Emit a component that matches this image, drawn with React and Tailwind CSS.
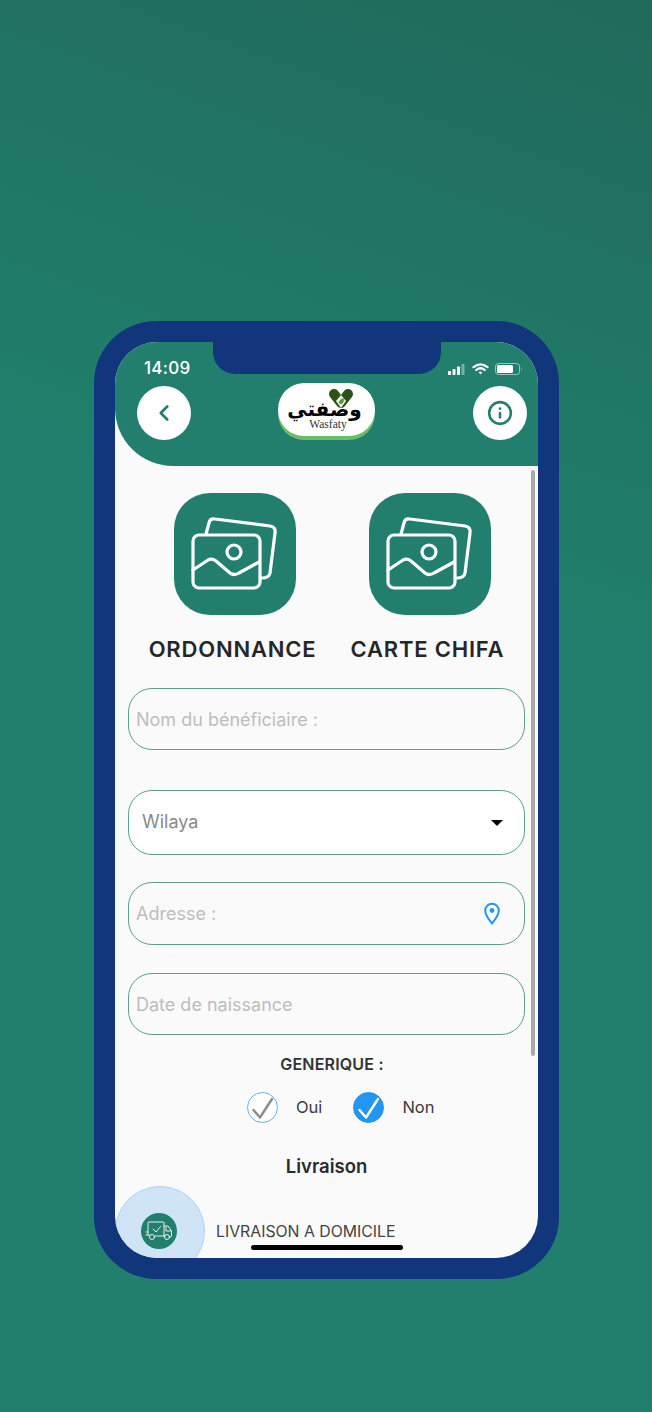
import { ChevronLeft, Info } from "lucide-react";

const PhotosIcon = () => (
  <svg width="122" height="122" viewBox="0 0 122 122" fill="none" stroke="white" strokeWidth="3.2" strokeLinecap="round" strokeLinejoin="round">
    <rect x="19" y="42" width="67" height="53" rx="6" />
    <path d="M32 41 L35 30 Q36 25 41 26 L96 33 Q102 34 101 40 L96 80 Q95 85 88 85" />
    <circle cx="60" cy="59" r="7" />
    <path d="M19 77 L34 67 Q38 65 42 68 L56 80 Q60 83 65 80 L85 69" />
  </svg>
);

const Field = ({ label, className = "", children }) => (
  <div className={`flex items-center rounded-[24px] border border-[#5f9e8f] pl-[7px] pr-[24px] text-[18px] text-[#bdbdbd] ${className}`}>
    <span className="flex-1">{label}</span>
    {children}
  </div>
);

const Tile = ({ label }) => (
  <div className="flex flex-col items-center">
    <div className="ml-[5px] h-[122px] w-[122px] rounded-[36px] bg-[#227f6d]">
      <PhotosIcon />
    </div>
    <span className="mt-[20px] whitespace-nowrap text-[22px] leading-[28px] font-semibold tracking-[0.8px] text-[#262626]">{label}</span>
  </div>
);

const Logo = () => (
  <div className="h-[57px] w-[97px] overflow-hidden rounded-[26px] bg-[#6dbd68]">
    <div className="flex h-[53px] w-full flex-col items-center rounded-[26px] bg-white">
      <svg className="mt-[5px] ml-[29px]" width="28" height="22" viewBox="0 0 28 22" fill="none">
        <path d="M7 6 L14 15 L21 6" stroke="#2c5219" strokeWidth="10" strokeLinecap="round" strokeLinejoin="round" />
        <path d="M14 7 L19 13 L14 20 L9 13 Z" fill="#eef5ea" />
        <path d="M11.5 15 Q13 10 17 10.5 Q17 16 13.5 16 Z" fill="#4f9a3a" />
      </svg>
      <span dir="rtl" className="-mt-[6px] -ml-[4px] text-[20px] leading-[10px] font-bold text-black font-['DejaVu_Sans',sans-serif]">وصفتي</span>
      <span className="mt-[5px] ml-[3px] text-[11.5px] leading-[10px] text-[#333] font-['Liberation_Serif',serif]">Wasfaty</span>
    </div>
  </div>
);

const StatusIcons = () => (
  <div className="flex items-center gap-[6px]">
    <svg width="18" height="11" viewBox="0 0 18 11" fill="white">
      <rect x="0" y="7" width="3" height="4" rx="0.7" />
      <rect x="4.5" y="5" width="3" height="6" rx="0.7" />
      <rect x="9" y="2.5" width="3" height="8.5" rx="0.7" />
      <rect x="13.5" y="0" width="3" height="11" rx="0.7" fill="#ffffff66" />
    </svg>
    <svg width="17" height="12" viewBox="0 0 17 12" fill="none" stroke="white" strokeWidth="2.2" strokeLinecap="round">
      <path d="M1.5 4.2 Q8.5 -1.6 15.5 4.2" />
      <path d="M4.2 7 Q8.5 3.5 12.8 7" />
      <path d="M6.6 9.2 L8.5 11.6 L10.4 9.2 Q8.5 8 6.6 9.2 Z" fill="white" stroke="none" />
    </svg>
    <svg width="28" height="12" viewBox="0 0 28 12" fill="none">
      <rect x="0.5" y="0.5" width="24" height="11" rx="3" stroke="#ffffff88" />
      <rect x="2" y="2" width="16" height="8" rx="1.6" fill="white" />
      <path d="M26 4 Q27.5 6 26 8 Z" fill="#ffffff88" />
    </svg>
  </div>
);

const Check = ({ checked }) => (
  <div className={`flex h-[31px] w-[31px] items-center justify-center rounded-full border ${checked ? "border-[#2196f3] bg-[#2196f3]" : "border-[#64b0ee] bg-white"}`}>
    <svg width="28" height="26" viewBox="0 0 28 26" fill="none" stroke={checked ? "white" : "#8b8b8b"} strokeWidth="2.4" strokeLinecap="round" strokeLinejoin="round">
      <path d="M4.5 15 L11 22.5 L23 4" />
    </svg>
  </div>
);

const TruckIcon = () => (
  <svg width="28" height="20" viewBox="0 0 28 20" fill="none" stroke="#e6f2ee" strokeWidth="1" strokeLinecap="round" strokeLinejoin="round">
    <path d="M3 14 V2 Q3 1 4 1 H18 Q19 1 19 2 V15 H10" />
    <path d="M19 5 H23 L26.5 10 V15 Q26.5 16 25.5 16 H24.5" />
    <path d="M19 15 H20 M21 6 V10 H26.5" />
    <circle cx="7" cy="16" r="2.5" />
    <circle cx="22" cy="16" r="2.5" />
    <path d="M1 11 H3 M1 14 H4.5" />
    <path d="M8 8 L11 11 L15.5 5.5" />
  </svg>
);

export default function App() {
  return (
    <div className="h-[1412px] w-full overflow-hidden bg-[linear-gradient(200deg,#216a5a_0%,#20806d_42%,#20806d_100%)] pt-[321px] pl-[94px] font-['Inter',sans-serif]">
      {/* phone shell */}
      <div className="relative h-[958px] w-[465px] rounded-[62px] bg-[#12367c] p-[21px]">
        <div className="relative flex h-[916px] w-[423px] flex-col overflow-hidden rounded-[42px] bg-[#fafafa]">
          {/* header */}
          <div className="h-[124px] shrink-0 rounded-bl-[58px] bg-[#227f6d] px-[22px]">
            <div className="flex h-[44px] items-center justify-between pl-[7px] pt-[10px]">
              <span className="text-[17px] font-medium tracking-[0.3px] text-white">14:09</span>
              <div className="-mr-[7px]"><StatusIcons /></div>
            </div>
            <div className="flex items-center justify-between">
              <div className="flex h-[54px] w-[54px] items-center justify-center rounded-full bg-white">
                <ChevronLeft size={26} color="#227f6d" strokeWidth={2.4} className="-ml-[1px]" />
              </div>
              <div className="-mt-[3px] -ml-[11px]"><Logo /></div>
              <div className="-mr-[11px] flex h-[54px] w-[54px] items-center justify-center rounded-full bg-white">
                <Info size={26} color="#227f6d" strokeWidth={2.4} />
              </div>
            </div>
          </div>

          {/* form */}
          <div className="flex flex-1 flex-col px-[13px] pt-[27px]">
            <div className="grid grid-cols-[195px_195px] justify-start pl-[7px]">
              <Tile label="ORDONNANCE" />
              <Tile label="CARTE CHIFA" />
            </div>
            <Field label="Nom du bénéficiaire :" className="mt-[25px] h-[62px] w-[397px]" />
            <Field label="Wilaya" className="mt-[40px] h-[65px] w-[397px] bg-white !pl-[13px] pb-[2px] !text-[#8a8a8a]">
              <span className="-mr-[3px] mt-[2px] h-0 w-0 border-x-[6px] border-t-[6px] border-x-transparent border-t-black" />
            </Field>
            <Field label="Adresse :" className="mt-[27px] h-[63px] w-[397px]">
              <svg width="16" height="23" viewBox="0 0 16 23" fill="none" stroke="#2196f3" strokeWidth="2">
                <path d="M8 21.5 C5 17.5 1.2 13.5 1.2 8.5 A6.8 6.8 0 0 1 14.8 8.5 C14.8 13.5 11 17.5 8 21.5 Z" />
                <circle cx="8" cy="8.5" r="2.4" fill="#2196f3" stroke="none" />
              </svg>
            </Field>
            <Field label="Date de naissance" className="mt-[28px] h-[62px] w-[397px]" />

            <p className="mt-[19px] w-[397px] pl-[11px] text-center text-[16px] leading-[20px] font-semibold tracking-[0.2px] text-[#333]">GENERIQUE :</p>
            <div className="mt-[18px] flex items-center pl-[119px] text-[16.5px] text-[#3a3a3a]">
              <Check />
              <span className="ml-[18px]">Oui</span>
              <div className="ml-[31px]"><Check checked /></div>
              <span className="ml-[18px]">Non</span>
            </div>
            <p className="mt-[32px] w-[397px] text-center text-[18.5px] leading-[22px] font-semibold text-[#2b2b2b]">Livraison</p>
            <div className="mt-[9px] -ml-[13px] flex items-center">
              <div className="flex h-[90px] w-[90px] shrink-0 items-center justify-center rounded-full border border-[#a9d2f3] bg-[#d0e4f7] pr-[2px]">
                <div className="flex h-[36px] w-[36px] items-center justify-center rounded-full bg-[#227f6d]">
                  <TruckIcon />
                </div>
              </div>
              <span className="ml-[11px] pt-[2px] text-[15.8px] text-[#444]">LIVRAISON A DOMICILE</span>
            </div>
          </div>

          {/* scrollbar + home bar */}
          <div className="absolute top-[128px] right-[3px] h-[586px] w-[4px] rounded-full bg-[#a8a8a8]" />
          <div className="absolute bottom-[8px] left-[136px] h-[5px] w-[152px] rounded-full bg-black" />
        </div>
        {/* notch */}
        <div className="absolute top-[21px] left-[119px] h-[32px] w-[228px] rounded-b-[22px] bg-[#12367c]" />
      </div>
    </div>
  );
}
